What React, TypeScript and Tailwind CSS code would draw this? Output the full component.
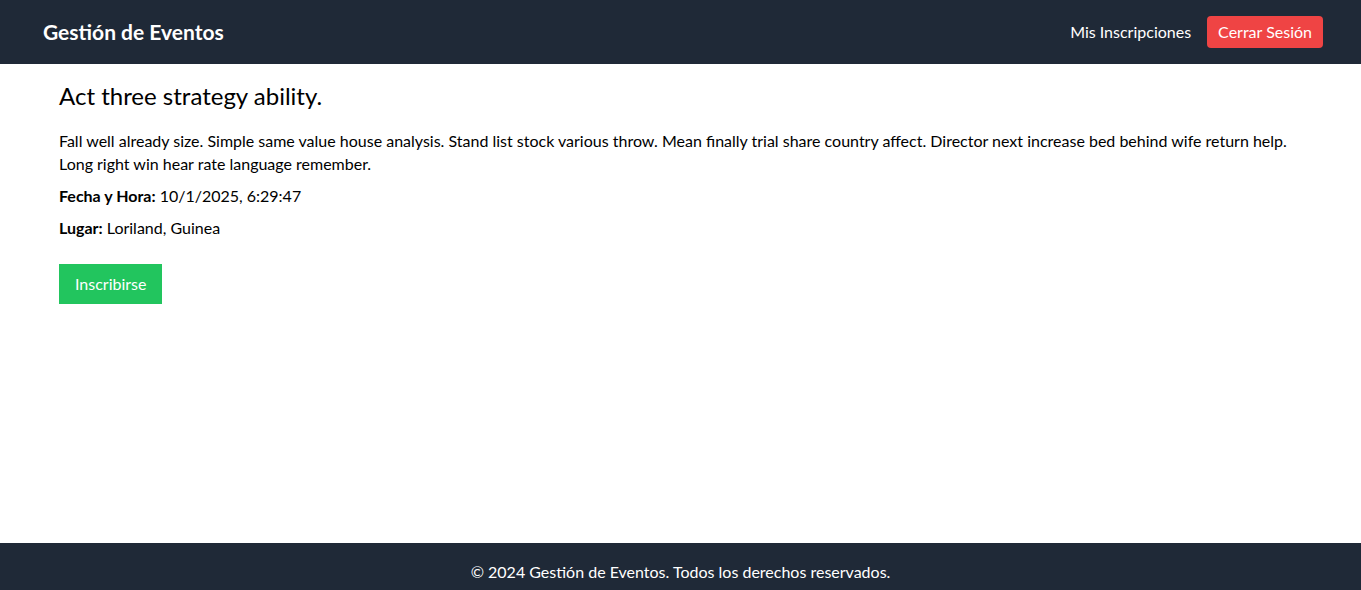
export default function App() {
  return (
    <div className="flex flex-col bg-white text-black" style={{ fontFamily: 'Lato, "Open Sans", sans-serif' }}>
      <header className="h-16 bg-[#1f2937] flex items-center justify-between pl-[43px] pr-[38px] text-white">
        <h1 className="text-[21px] leading-7 font-bold -mt-px">Gestión de Eventos</h1>
        <nav className="flex items-center gap-4">
          <a className="text-base">Mis Inscripciones</a>
          <button className="bg-[#ef4444] text-white rounded px-[11px] h-8 text-base">Cerrar Sesión</button>
        </nav>
      </header>
      <main className="h-[479px] px-[59px] pt-4">
        <h2 className="text-2xl mb-[17px]">Act three strategy ability.</h2>
        <p className="text-base leading-[23px] mb-[9px]">
          Fall well already size. Simple same value house analysis. Stand list stock various throw. Mean finally trial share country affect. Director next increase bed behind wife return help. Long right win hear rate language remember.
        </p>
        <p className="mb-2"><strong>Fecha y Hora:</strong> 10/1/2025, 6:29:47</p>
        <p className="mb-6"><strong>Lugar:</strong> Loriland, Guinea</p>
        <button className="bg-[#22c55e] text-white px-4 h-10">Inscribirse</button>
      </main>
      <footer className="bg-[#1f2937] text-white text-center pt-[17px] pb-4">
        © 2024 Gestión de Eventos. Todos los derechos reservados.
      </footer>
    </div>
  );
}
